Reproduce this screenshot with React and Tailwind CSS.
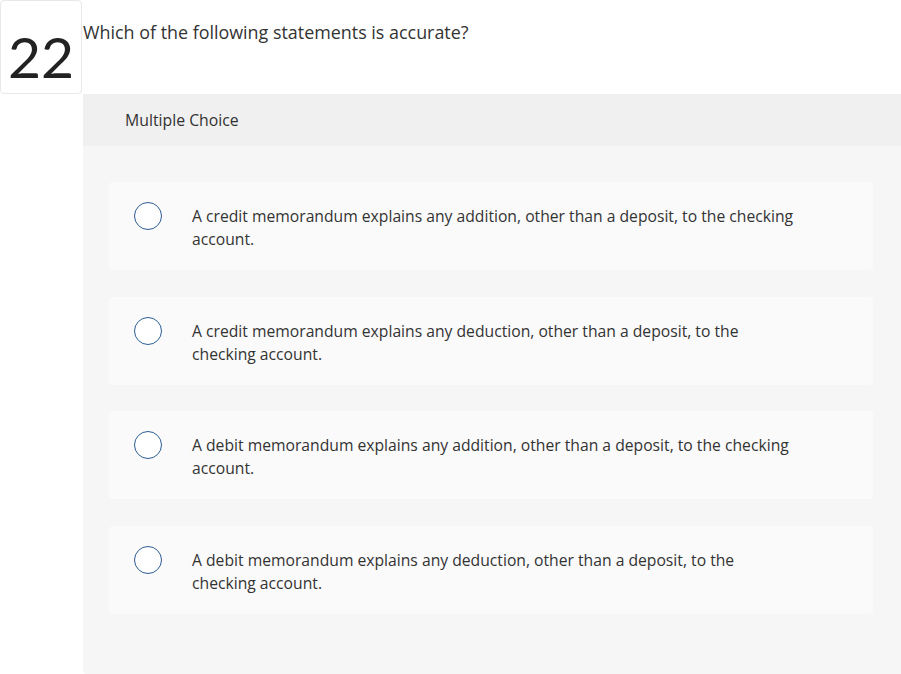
const options = [
  ['A credit memorandum explains any addition, other than a deposit, to the checking', 'account.'],
  ['A credit memorandum explains any deduction, other than a deposit, to the', 'checking account.'],
  ['A debit memorandum explains any addition, other than a deposit, to the checking', 'account.'],
  ['A debit memorandum explains any deduction, other than a deposit, to the', 'checking account.'],
];

export default function App() {
  return (
    <div className="w-[901px] h-[674px] bg-white text-[#333] overflow-hidden" style={{ fontFamily: '"Open Sans", Lato, sans-serif' }}>
      <div className="flex">
        <div className="w-[82px] h-[94px] shrink-0 border border-[#e8e8e8] rounded-[4px] flex items-end justify-center pb-[8px]">
          <span className="text-[57px] leading-none text-[#222]" style={{ fontFamily: 'Lato, sans-serif' }}>22</span>
        </div>
        <div className="pl-[1px] pt-[20px] text-[17.9px] leading-[24px] text-[#333]">
          Which of the following statements is accurate?
        </div>
      </div>
      <div className="ml-[83px] h-[580px] bg-[#f6f6f6] rounded-bl-[4px]">
        <div className="h-[52px] bg-[#f0f0f0] flex items-center pl-[42px] pt-[2px] text-[15.8px] text-[#333]">
          Multiple Choice
        </div>
        <div className="pt-[36px] pl-[26px] pr-[28px] flex flex-col gap-[26.7px]">
          {options.map((lines, i) => (
            <div key={i} className="h-[88px] bg-[#fafafa] rounded-[4px] flex items-start pt-[21px] pl-[25px]">
              <div className="w-[28px] h-[28px] mt-[-1px] rounded-full border-[1.5px] border-[#2b5d92] bg-white shrink-0" />
              <div className="ml-[30px] pt-[2px] text-[15.7px] leading-[23px] text-[#333]">
                {lines.map((l, j) => (
                  <div key={j} className="whitespace-nowrap">{l}</div>
                ))}
              </div>
            </div>
          ))}
        </div>
      </div>
    </div>
  );
}
